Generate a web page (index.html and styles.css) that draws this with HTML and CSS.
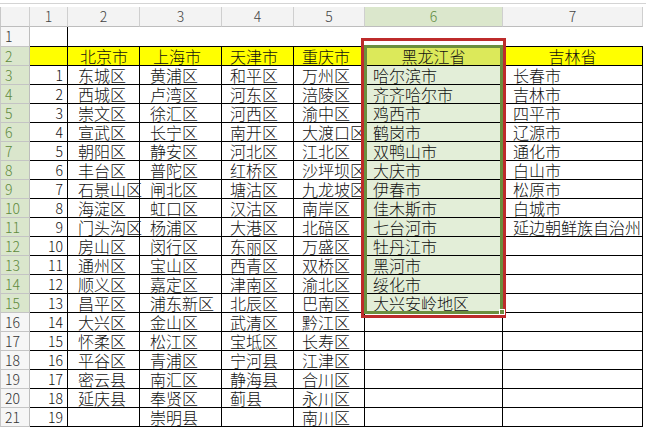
FILE: index.html
```html
<!DOCTYPE html>
<html lang="zh-CN">
<head>
<meta charset="utf-8">
<title>Sheet</title>
<link rel="stylesheet" href="styles.css">
</head>
<body>
<div class="sheet">
  <div class="top"></div>
  <div class="row hdr">
    <div></div><div>1</div><div>2</div><div>3</div><div>4</div><div>5</div><div class="hs">6</div><div>7</div>
  </div>
  <div class="row r1">
    <div class="rh">1</div><div class="e b"></div><div class="e"></div><div class="e"></div><div class="e"></div><div class="e"></div><div class="e"></div><div class="e"></div>
  </div>
  <div class="row r2">
    <div class="rh s">2</div><div class="c y"></div><div class="c y">北京市</div><div class="c y">上海市</div><div class="c y">天津市</div><div class="c y">重庆市</div><div class="c gy ctr">黑龙江省</div><div class="c y ctr">吉林省</div>
  </div>
  <div class="row"><div class="rh s">3</div><div class="c n">1</div><div class="c">东城区</div><div class="c">黄浦区</div><div class="c">和平区</div><div class="c">万州区</div><div class="c g">哈尔滨市</div><div class="c">长春市</div></div>
  <div class="row"><div class="rh s">4</div><div class="c n">2</div><div class="c">西城区</div><div class="c">卢湾区</div><div class="c">河东区</div><div class="c">涪陵区</div><div class="c g">齐齐哈尔市</div><div class="c">吉林市</div></div>
  <div class="row"><div class="rh s">5</div><div class="c n">3</div><div class="c">崇文区</div><div class="c">徐汇区</div><div class="c">河西区</div><div class="c">渝中区</div><div class="c g">鸡西市</div><div class="c">四平市</div></div>
  <div class="row"><div class="rh s">6</div><div class="c n">4</div><div class="c">宣武区</div><div class="c">长宁区</div><div class="c">南开区</div><div class="c">大渡口区</div><div class="c g">鹤岗市</div><div class="c">辽源市</div></div>
  <div class="row"><div class="rh s">7</div><div class="c n">5</div><div class="c">朝阳区</div><div class="c">静安区</div><div class="c">河北区</div><div class="c">江北区</div><div class="c g">双鸭山市</div><div class="c">通化市</div></div>
  <div class="row"><div class="rh s">8</div><div class="c n">6</div><div class="c">丰台区</div><div class="c">普陀区</div><div class="c">红桥区</div><div class="c">沙坪坝区</div><div class="c g">大庆市</div><div class="c">白山市</div></div>
  <div class="row"><div class="rh s">9</div><div class="c n">7</div><div class="c">石景山区</div><div class="c">闸北区</div><div class="c">塘沽区</div><div class="c">九龙坡区</div><div class="c g">伊春市</div><div class="c">松原市</div></div>
  <div class="row"><div class="rh s">10</div><div class="c n">8</div><div class="c">海淀区</div><div class="c">虹口区</div><div class="c">汉沽区</div><div class="c">南岸区</div><div class="c g">佳木斯市</div><div class="c">白城市</div></div>
  <div class="row"><div class="rh s">11</div><div class="c n">9</div><div class="c">门头沟区</div><div class="c">杨浦区</div><div class="c">大港区</div><div class="c">北碚区</div><div class="c g">七台河市</div><div class="c">延边朝鲜族自治州</div></div>
  <div class="row"><div class="rh s">12</div><div class="c n">10</div><div class="c">房山区</div><div class="c">闵行区</div><div class="c">东丽区</div><div class="c">万盛区</div><div class="c g">牡丹江市</div><div class="c"></div></div>
  <div class="row"><div class="rh s">13</div><div class="c n">11</div><div class="c">通州区</div><div class="c">宝山区</div><div class="c">西青区</div><div class="c">双桥区</div><div class="c g">黑河市</div><div class="c"></div></div>
  <div class="row"><div class="rh s">14</div><div class="c n">12</div><div class="c">顺义区</div><div class="c">嘉定区</div><div class="c">津南区</div><div class="c">渝北区</div><div class="c g">绥化市</div><div class="c"></div></div>
  <div class="row"><div class="rh s">15</div><div class="c n">13</div><div class="c">昌平区</div><div class="c">浦东新区</div><div class="c">北辰区</div><div class="c">巴南区</div><div class="c g">大兴安岭地区</div><div class="c"></div></div>
  <div class="row"><div class="rh">16</div><div class="c n">14</div><div class="c">大兴区</div><div class="c">金山区</div><div class="c">武清区</div><div class="c">黔江区</div><div class="c"></div><div class="c"></div></div>
  <div class="row"><div class="rh">17</div><div class="c n">15</div><div class="c">怀柔区</div><div class="c">松江区</div><div class="c">宝坻区</div><div class="c">长寿区</div><div class="c"></div><div class="c"></div></div>
  <div class="row"><div class="rh">18</div><div class="c n">16</div><div class="c">平谷区</div><div class="c">青浦区</div><div class="c">宁河县</div><div class="c">江津区</div><div class="c"></div><div class="c"></div></div>
  <div class="row"><div class="rh">19</div><div class="c n">17</div><div class="c">密云县</div><div class="c">南汇区</div><div class="c">静海县</div><div class="c">合川区</div><div class="c"></div><div class="c"></div></div>
  <div class="row"><div class="rh">20</div><div class="c n">18</div><div class="c">延庆县</div><div class="c">奉贤区</div><div class="c">蓟县</div><div class="c">永川区</div><div class="c"></div><div class="c"></div></div>
  <div class="row"><div class="rh">21</div><div class="c n">19</div><div class="c"></div><div class="c">崇明县</div><div class="c"></div><div class="c">南川区</div><div class="c"></div><div class="c"></div></div>

  <div class="redbox"></div>
  <div class="selbox"></div>
  <div class="handle"></div>
</div>
</body>
</html>
```
FILE: styles.css
```css
body {
  margin: 0;
  background: #fff;
  font-family: "Noto Sans CJK SC", "Noto Sans", sans-serif;
}
.sheet {
  position: relative;
  width: 646px;
  height: 429px;
  overflow: hidden;
}
.top {
  height: 3px;
  border-bottom: 1px solid #d4d4d4;
  margin-bottom: 3px;
}
.row {
  display: grid;
  grid-template-columns: 30px 38px 72px 82px 72px 71px 138px 140px;
  height: 19px;
}
.row > div {
  box-sizing: border-box;
  white-space: nowrap;
  font-size: 16px;
  line-height: 18px;
  font-weight: 300;
  color: #111;
}
.hdr, .r1 { height: 20px; }
.hdr > div {
  background: #f3f3f3;
  border-right: 1px solid #cfcfcf;
  border-bottom: 1px solid #bdbdbd;
  text-align: center;
  font-size: 14px;
  line-height: 19px;
  color: #444;
}
.hdr > div:first-child { border-left: 1px solid #c8c8c8; }
.hdr > .hs {
  background: #dbe7cc;
  color: #5e8a3c;
}
.r1 > div { line-height: 19px; }
.rh {
  border-left: 1px solid #c8c8c8;
  border-right: 1px solid #bdbdbd;
  border-bottom: 1px solid #c4c4c4;
  background: #f6f6f6;
  padding-left: 4px;
}
.row > .rh { font-size: 14px; color: #333; }
.row > .rh.s { background: #dae6cc; color: #5e8a3c; }
.e { border-bottom: 1px solid #000; }
.e.b { border-right: 1px solid #000; }
.c {
  border-right: 1px solid #000;
  border-bottom: 1px solid #000;
}
.row > .c:nth-child(3), .row > .c:nth-child(4), .row > .c:nth-child(8) { padding-left: 10px; }
.row > .c:nth-child(5), .row > .c:nth-child(6), .row > .c:nth-child(7) { padding-left: 8px; }
.r2 > .c:nth-child(3) { padding-left: 12px; }
.r2 > .c:nth-child(4) { padding-left: 13px; }
.row > .c.ctr { padding-left: 0; text-align: center; }
.row > .n {
  text-align: right;
  padding-right: 4px;
  font-size: 14px;
}
.y { background: #ffff00; }
.g { background: #e3eed8; }
.gy { background: #dce95a; }
.redbox {
  position: absolute;
  left: 361px;
  top: 38px;
  width: 145px;
  height: 280px;
  border: 3px solid #bd2b2b;
  box-sizing: border-box;
}
.selbox {
  position: absolute;
  left: 364px;
  top: 45px;
  width: 139px;
  height: 269px;
  border: 3px solid #6b8e3e;
  box-sizing: border-box;
}
.handle {
  position: absolute;
  left: 499px;
  top: 309px;
  width: 6px;
  height: 6px;
  background: #6b8e3e;
  border: 1px solid #fff;
  box-sizing: border-box;
}
```
